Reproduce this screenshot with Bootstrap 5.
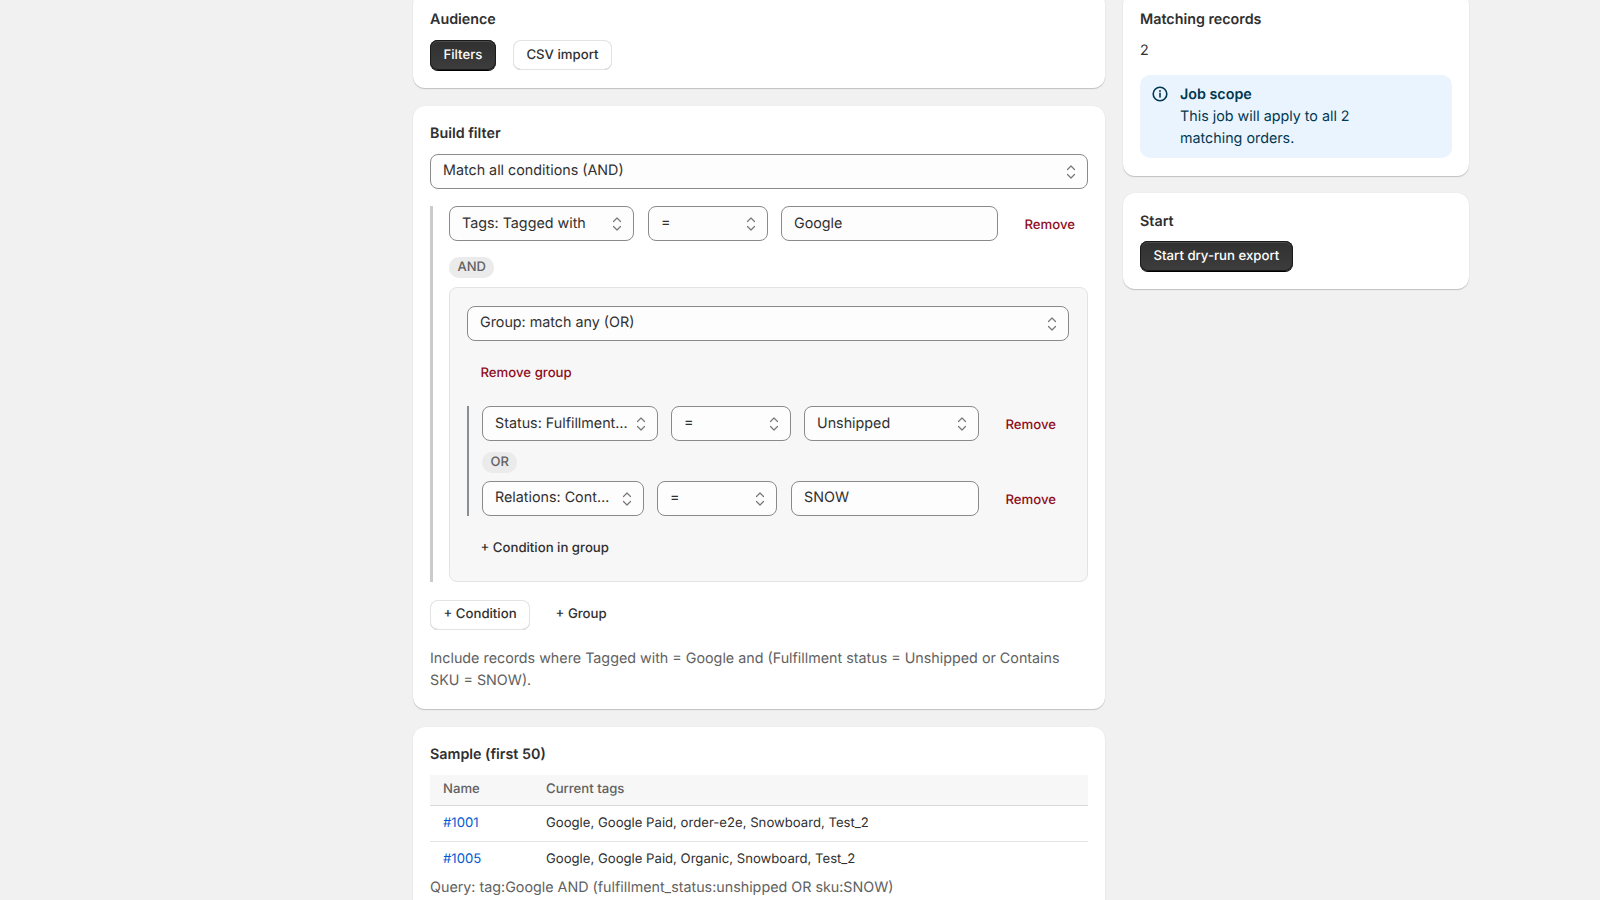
<!DOCTYPE html>
<html lang="en">
<head>
  <meta charset="UTF-8" />
  <meta name="viewport" content="width=device-width, initial-scale=1" />
  <title>Bulk job</title>
  <link href="https://cdn.jsdelivr.net/npm/bootstrap@5.3.0/dist/css/bootstrap.min.css" rel="stylesheet" />
  <style>
    * { text-rendering: geometricPrecision; }
    html, body { height: 900px; overflow: hidden; }
    body { background: #f1f1f1; color: #303030; font-family: "Inter", "Liberation Sans", sans-serif; font-size: 14.3px; line-height: 22px; }
    .page-wrap { margin: -8px 0 0 413px; width: 1056px; gap: 18px; }
    .main-col { width: 692px; gap: 18px; }
    .side-col { width: 346px; gap: 17px; }
    .pnl { background: #fff; border: 0; border-radius: 12px; padding: 17px; box-shadow: 0 1px 1px rgba(26,26,26,.22), 0 0 1px rgba(26,26,26,.08); }
    .pnl-title { font-weight: 600; line-height: 20px; margin: 1px 0 10px; font-size: 14.3px; }
    .pnl-tail { padding-bottom: 18px; }
    .pbtn { font-size: 13.2px; font-weight: 550; line-height: 20px; border-radius: 8px; padding: 5px 13.5px; height: 30px; border: 0; color: #303030; background: transparent; white-space: nowrap; flex: none; }
    .pbtn:hover { color: #303030; }
    .pbtn-dark { color: #fff; background: linear-gradient(#303030, #3d3d3d); box-shadow: inset 0 0 0 1px #1a1a1a, inset 0 1px 0 1px #4a4a4a, 0 1px 0 #000; }
    .pbtn-dark:hover { color: #fff; background: #303030; }
    .pbtn-white { background: #fff; box-shadow: inset 0 0 0 1px #e3e3e3, inset 0 -1px 0 #b5b5b5; }
    .pbtn-red { color: #8e0b21; }
    .pbtn-red:hover { color: #8e0b21; }
    .pick { font-size: 14.3px; line-height: 20px; height: 35px; padding: 6px 32px 7px 12px; border: 1px solid #8a8a8a; border-radius: 8px; color: #303030; background-color: #fdfdfd; text-overflow: ellipsis; background-position: right 8px center; background-size: 16px 16px;
      background-image: url("data:image/svg+xml,%3Csvg xmlns='http://www.w3.org/2000/svg' viewBox='0 0 16 16' fill='none' stroke='%23777777' stroke-width='1.2' stroke-linecap='round' stroke-linejoin='round'%3E%3Cpath d='M4.5 5.5L8 2l3.5 3.5M4.5 10.5L8 14l3.5-3.5'/%3E%3C/svg%3E"); }
    .pick-tight { padding-right: 28px; }
    .field { font-size: 14.3px; line-height: 20px; height: 35px; padding: 6px 12px 7px; border: 1px solid #8a8a8a; border-radius: 8px; color: #303030; background: #fdfdfd; }
    .w-tag { width: 185px; margin-right: 1px; flex: none; padding-top: 7px; padding-bottom: 6px; }
    .w-op { width: 120px; flex: none; }
    .w-val { width: 217px; flex: none; }
    .w-stat { width: 176px; flex: none; padding-top: 7px; padding-bottom: 6px; }
    .w-ship { width: 175px; flex: none; padding-top: 7px; padding-bottom: 6px; }
    .w-rel { width: 162px; flex: none; }
    .w-snow { width: 188px; margin-left: 1px; flex: none; padding-top: 5px; padding-bottom: 8px; }
    .gap-13 { gap: 13px; }
    .gap-17 { gap: 17px; }
    .top-pick { margin-bottom: 17px; }
    .cond-wrap { border-left: 3px solid #c9cccf; padding-left: 16px; }
    .joiner { display: inline-block; background: #ebebeb; color: #616161; font-size: 13px; font-weight: 500; line-height: 21px; border-radius: 10px; padding: 0 8.5px; }
    .join-and { margin: 16px 0 9px; }
    .join-or { margin: 11px 0 8px; }
    .grp { background: #f7f7f7; border: 1px solid #e3e3e3; border-radius: 8px; padding: 18px 18px 0 17px; height: 295px; }
    .grp-remove { margin: 17px 0 18px; }
    .grp-rows { border-left: 2px solid #8a8f94; padding-left: 13px; height: 110px; }
    .grp-add { margin-top: 17px; }
    .row-remove { margin-left: auto; margin-top: 4px; }
    .add-bar { margin-top: 18px; gap: 12px; }
    .add-bar .pbtn { padding-top: 4px; padding-bottom: 6px; }
    .desc { color: #616161; margin: 18px 0 0; }
    .sample { font-size: 13.15px; margin: 0; }
    .sample th { background: #f7f7f7; color: #616161; font-weight: 550; height: 30px; padding: 0 12px 1px 13px; border-bottom: 1px solid #d9d9d9; line-height: 20px; vertical-align: middle; }
    .sample td { height: 36px; padding: 0 13px; color: #303030; font-weight: 400; border-bottom: 1px solid #e3e3e3; line-height: 20px; vertical-align: middle; }
    .sample tr:last-child td { border-bottom: 0; height: 35px; }
    .name-col { width: 103px; }
    .sample a { color: #005bd3; text-decoration: none; }
    .query { color: #616161; padding-top: 1px; }
    .count { margin: 0 0 13px; }
    .scope { background: #eaf4ff; color: #00384f; border-radius: 10px; padding: 9px 12px 8px; gap: 12px; margin-bottom: 1px; }
    .scope-text { max-width: 190px; }
    .scope-icon { width: 16px; height: 16px; margin-top: 2px; flex: none; }
    .start-title { margin: 2px 0 9px; }
  </style>
</head>
<body>

<div class="page-wrap d-flex align-items-start">
  <main class="main-col d-flex flex-column">

    <section class="pnl pnl-tail">
      <h2 class="pnl-title">Audience</h2>
      <div class="d-flex gap-17">
        <button type="button" class="btn pbtn pbtn-dark">Filters</button>
        <button type="button" class="btn pbtn pbtn-white">CSV import</button>
      </div>
    </section>

    <section class="pnl">
      <h2 class="pnl-title">Build filter</h2>
      <select class="form-select pick top-pick"><option>Match all conditions (AND)</option></select>

      <div class="cond-wrap">
        <div class="d-flex gap-13">
          <select class="form-select pick w-tag"><option>Tags: Tagged with</option></select>
          <select class="form-select pick w-op"><option>=</option></select>
          <input type="text" class="form-control field w-val" value="Google" />
          <button type="button" class="btn pbtn pbtn-red row-remove">Remove</button>
        </div>
        <span class="joiner join-and">AND</span>

        <div class="grp">
          <select class="form-select pick"><option>Group: match any (OR)</option></select>
          <div class="grp-remove">
            <button type="button" class="btn pbtn pbtn-red">Remove group</button>
          </div>
          <div class="grp-rows">
            <div class="d-flex gap-13">
              <select class="form-select pick pick-tight w-stat"><option>Status: Fulfillment status</option></select>
              <select class="form-select pick w-op"><option>=</option></select>
              <select class="form-select pick w-ship"><option>Unshipped</option></select>
              <button type="button" class="btn pbtn pbtn-red row-remove">Remove</button>
            </div>
            <span class="joiner join-or">OR</span>
            <div class="d-flex gap-13">
              <select class="form-select pick w-rel"><option>Relations: Contains SKU</option></select>
              <select class="form-select pick w-op"><option>=</option></select>
              <input type="text" class="form-control field w-snow" value="SNOW" />
              <button type="button" class="btn pbtn pbtn-red row-remove">Remove</button>
            </div>
          </div>
          <div class="grp-add">
            <button type="button" class="btn pbtn">+ Condition in group</button>
          </div>
        </div>
      </div>

      <div class="d-flex add-bar">
        <button type="button" class="btn pbtn pbtn-white">+ Condition</button>
        <button type="button" class="btn pbtn">+ Group</button>
      </div>
      <p class="desc">Include records where Tagged with = Google and (Fulfillment status = Unshipped or Contains SKU = SNOW).</p>
    </section>

    <section class="pnl">
      <h2 class="pnl-title">Sample (first 50)</h2>
      <table class="table sample">
        <thead>
          <tr><th class="name-col">Name</th><th>Current tags</th></tr>
        </thead>
        <tbody>
          <tr><td><a href="#">#1001</a></td><td>Google, Google Paid, order-e2e, Snowboard, Test_2</td></tr>
          <tr><td><a href="#">#1005</a></td><td>Google, Google Paid, Organic, Snowboard, Test_2</td></tr>
        </tbody>
      </table>
      <div class="query">Query: tag:Google AND (fulfillment_status:unshipped OR sku:SNOW)</div>
    </section>
  </main>

  <aside class="side-col d-flex flex-column">
    <section class="pnl">
      <h2 class="pnl-title">Matching records</h2>
      <div class="count">2</div>
      <div class="scope d-flex">
        <svg class="scope-icon" viewBox="0 0 16 16" fill="none" stroke="#00384f" stroke-width="1.6" stroke-linecap="round">
          <circle cx="8" cy="8" r="6.8" />
          <path d="M8 7.4v3.6" />
          <path d="M8 4.9v.1" stroke-width="1.9" />
        </svg>
        <div class="scope-text">
          <div class="fw-semibold">Job scope</div>
          <div>This job will apply to all 2 matching orders.</div>
        </div>
      </div>
    </section>

    <section class="pnl pnl-tail">
      <h2 class="pnl-title start-title">Start</h2>
      <button type="button" class="btn pbtn pbtn-dark">Start dry-run export</button>
    </section>
  </aside>
</div>

<script src="https://cdn.jsdelivr.net/npm/bootstrap@5.3.0/dist/js/bootstrap.bundle.min.js"></script>
</body>
</html>
